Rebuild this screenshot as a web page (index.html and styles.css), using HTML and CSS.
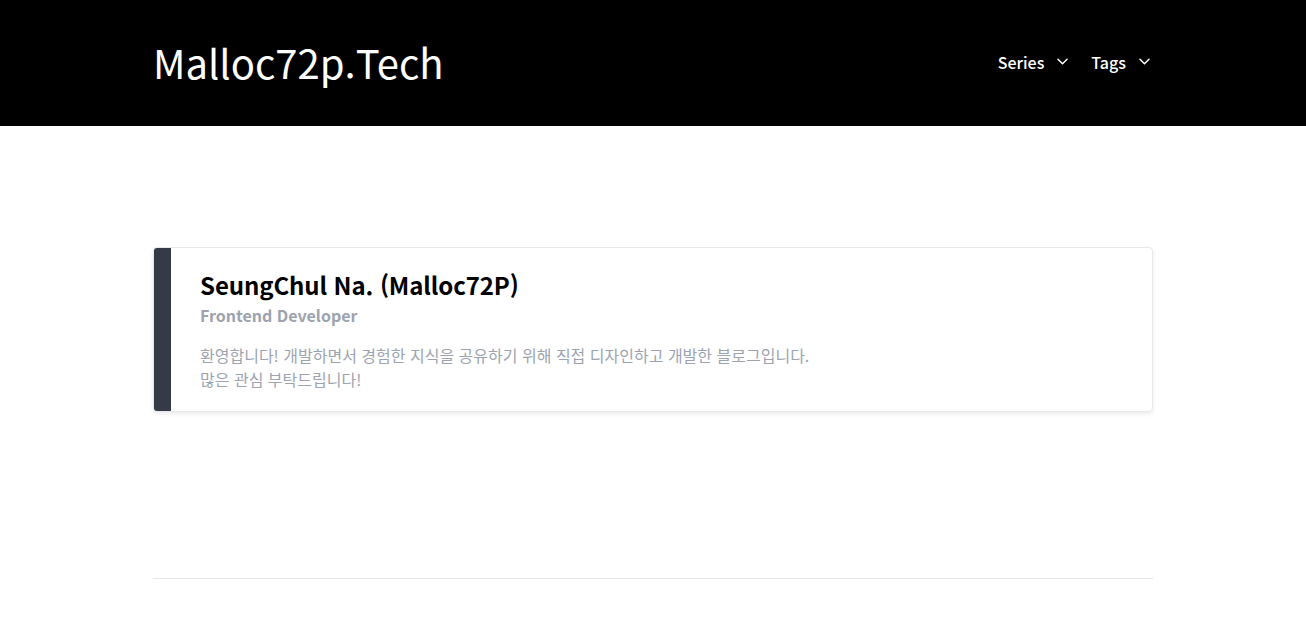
FILE: index.html
```html
<!DOCTYPE html>
<html lang="ko">
<head>
<meta charset="utf-8">
<title>Malloc72p.Tech</title>
<link rel="stylesheet" href="styles.css">
</head>
<body>
<header class="header">
  <div class="container header-inner">
    <a class="logo" href="#">Malloc72p.Tech</a>
    <nav class="nav">
      <button class="nav-item">Series
        <svg class="chev" viewBox="0 0 11 7" width="11" height="7"><path d="M1 1.2l4.5 4.5 4.5-4.5" fill="none" stroke="#fff" stroke-width="1.5" stroke-linecap="round" stroke-linejoin="round"/></svg>
      </button>
      <button class="nav-item">Tags
        <svg class="chev" viewBox="0 0 11 7" width="11" height="7"><path d="M1 1.2l4.5 4.5 4.5-4.5" fill="none" stroke="#fff" stroke-width="1.5" stroke-linecap="round" stroke-linejoin="round"/></svg>
      </button>
    </nav>
  </div>
</header>
<main class="container main">
  <section class="profile">
    <div class="profile-bar"></div>
    <div class="profile-body">
      <h1 class="profile-name">SeungChul Na. (Malloc72P)</h1>
      <p class="profile-role">Frontend Developer</p>
      <p class="profile-desc">환영합니다! 개발하면서 경험한 지식을 공유하기 위해 직접 디자인하고 개발한 블로그입니다.<br>많은 관심 부탁드립니다!</p>
    </div>
  </section>
  <hr class="divider">
</main>
</body>
</html>
```

FILE: styles.css
```css
* { box-sizing: border-box; }
html, body { margin: 0; padding: 0; background: #fff; }
body {
  font-family: "Noto Sans CJK KR", "Noto Sans", sans-serif;
  color: #000;
}
.container { width: 1000px; margin: 0 auto; }
.header { background: #000; height: 126px; }
.header-inner {
  height: 100%;
  display: flex;
  align-items: center;
  justify-content: space-between;
}
.logo {
  color: #fff;
  text-decoration: none;
  font-size: 40px;
  font-weight: 400;
  line-height: 1;
  margin-top: -2px;
}
.nav { display: flex; align-items: center; gap: 23px; margin-top: -2px; margin-right: 3px; }
.nav-item {
  background: none;
  border: 0;
  padding: 0;
  color: #fff;
  font-family: inherit;
  font-size: 16px;
  font-weight: 500;
  display: flex;
  align-items: center;
  gap: 13px;
  cursor: pointer;
}
.chev { display: block; margin-top: -1px; }
.main { padding-top: 121px; }
.profile {
  display: flex;
  border: 1px solid #e8e8ec;
  border-radius: 4px;
  overflow: hidden;
  box-shadow: 0 2px 4px rgba(0,0,0,0.08);
  height: 165px;
}
.profile-bar { width: 17px; background: #343a46; flex: none; }
.profile-body { padding: 21px 29px; }
.profile-name {
  margin: 0;
  font-size: 24px;
  font-weight: 700;
  line-height: 32px;
  letter-spacing: -0.1px;
}
.profile-role {
  margin: 2px 0 0;
  font-size: 16px;
  font-weight: 700;
  color: #9ca3af;
  line-height: 24px;
}
.profile-desc {
  margin: 16px 0 0;
  font-size: 16px;
  color: #9ca3af;
  line-height: 24px;
}
.divider {
  margin: 166px 0 0;
  border: 0;
  border-top: 1px solid #e5e5ec;
}
```
